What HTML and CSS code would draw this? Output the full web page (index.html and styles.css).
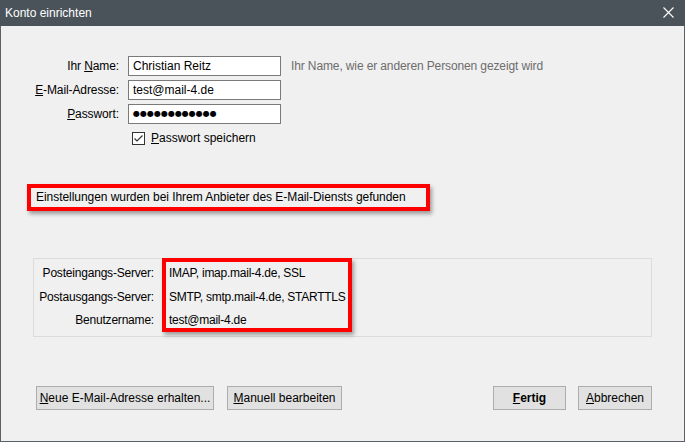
FILE: index.html
```html
<!DOCTYPE html>
<html lang="de">
<head>
    <meta charset="UTF-8">
    <meta name="viewport" content="width=device-width, initial-scale=1.0">
    <title>Konto einrichten</title>
    <link rel="stylesheet" href="styles.css">
</head>
<body>
    <div class="window">
        <div class="titlebar">
            <span class="title">Konto einrichten</span>
            <svg class="close" width="11" height="11" viewBox="0 0 11 11">
                <path d="M0.5 0.5 L10.5 10.5 M10.5 0.5 L0.5 10.5" stroke="#fff" stroke-width="1.1" fill="none"/>
            </svg>
        </div>

        <div class="content">
            <div class="form-grid">
                <label class="label" for="name">Ihr <u>N</u>ame:</label>
                <input class="field" type="text" id="name" value="Christian Reitz">
                <span class="hint">Ihr Name, wie er anderen Personen gezeigt wird</span>

                <label class="label" for="email"><u>E</u>-Mail-Adresse:</label>
                <input class="field" type="text" id="email" value="test@mail-4.de">
                <span></span>

                <label class="label" for="pass"><u>P</u>asswort:</label>
                <div class="field dots" id="pass">●●●●●●●●●●●●</div>
                <span></span>

                <span></span>
                <label class="check-row">
                    <svg class="checkbox" width="13" height="13" viewBox="0 0 13 13">
                        <rect x="0.5" y="0.5" width="12" height="12" fill="#fff" stroke="#333" stroke-width="1"/>
                        <path d="M2.5 6.5 L5 9 L10.5 3.5" stroke="#333" stroke-width="1.2" fill="none"/>
                    </svg>
                    <span><u>P</u>asswort speichern</span>
                </label>
                <span></span>
            </div>

            <div class="notice">Einstellungen wurden bei Ihrem Anbieter des E-Mail-Diensts gefunden</div>

            <div class="server-group">
                <div class="server-labels">
                    <div>Posteingangs-Server:</div>
                    <div>Postausgangs-Server:</div>
                    <div>Benutzername:</div>
                </div>
                <div class="server-values">
                    <div>IMAP, imap.mail-4.de, SSL</div>
                    <div>SMTP, smtp.mail-4.de, STARTTLS</div>
                    <div>test@mail-4.de</div>
                </div>
            </div>

            <div class="button-row">
                <button class="btn btn-new"><u>N</u>eue E-Mail-Adresse erhalten...</button>
                <button class="btn btn-manual"><u>M</u>anuell bearbeiten</button>
                <span class="spacer"></span>
                <button class="btn btn-done"><u>F</u>ertig</button>
                <button class="btn btn-cancel"><u>A</u>bbrechen</button>
            </div>
        </div>
    </div>
</body>
</html>
```

FILE: styles.css
```css
body {
    margin: 0;
    padding: 0;
    background-color: #f0f0f0;
    font-family: "Liberation Sans", Arial, sans-serif;
    font-size: 12px;
    color: #000;
}
.window {
    width: 685px;
    height: 442px;
    box-sizing: border-box;
    border: 1px solid #5b6166;
    border-top: none;
    background-color: #f0f0f0;
}
.titlebar {
    height: 26px;
    margin: 0 -1px;
    background-color: #4b535a;
    display: flex;
    align-items: center;
    justify-content: space-between;
    padding: 0 11px 0 5px;
}
.title {
    color: #fff;
    font-size: 12px;
}
.close {
    display: block;
    margin-top: -1px;
}
.content {
    padding-top: 30px;
}
.form-grid {
    display: grid;
    grid-template-columns: 118px 153px auto;
    column-gap: 9px;
    row-gap: 4px;
    align-items: center;
}
.label {
    text-align: right;
    letter-spacing: -0.1px;
}
.field {
    box-sizing: border-box;
    height: 20px;
    width: 153px;
    margin: 0;
    padding: 0 4px;
    border: 1px solid #7a7a7a;
    background-color: #fff;
    font-family: inherit;
    font-size: 12px;
    color: #000;
    outline: none;
}
.dots {
    font-family: "DejaVu Sans", sans-serif;
    font-size: 8px;
    line-height: 18px;
    letter-spacing: 0;
}
.hint {
    color: #6d6d6d;
    padding-left: 1px;
    letter-spacing: -0.12px;
}
.check-row {
    display: flex;
    align-items: center;
    gap: 6px;
    margin-left: 4px;
    margin-top: 3px;
    height: 14px;
}
.checkbox {
    display: block;
}
.notice {
    margin: 39px 0 0 26px;
    width: 403px;
    height: 27px;
    box-sizing: border-box;
    border: 4px solid #ff0000;
    box-shadow: 2px 3px 4px rgba(0, 0, 0, 0.35);
    padding-left: 5px;
    line-height: 19px;
    letter-spacing: -0.05px;
    white-space: nowrap;
}
.server-group {
    margin: 47px 0 0 32px;
    width: 619px;
    height: 79px;
    box-sizing: border-box;
    border: 1px solid #dcdcdc;
    display: flex;
    gap: 8px;
}
.server-labels {
    width: 120px;
    text-align: right;
    padding-top: 3px;
    line-height: 23.5px;
    white-space: nowrap;
    letter-spacing: -0.2px;
}
.server-values {
    margin-top: -1px;
    width: 190px;
    height: 74px;
    box-sizing: border-box;
    border: 4px solid #ff0000;
    box-shadow: 2px 3px 4px rgba(0, 0, 0, 0.35);
    padding-left: 3px;
    line-height: 23.5px;
    white-space: nowrap;
    letter-spacing: -0.25px;
}
.button-row {
    display: flex;
    margin: 49px 32px 0 35px;
    gap: 13px;
}
.spacer {
    flex: 1;
}
.btn {
    height: 24px;
    box-sizing: border-box;
    border: 1px solid #adadad;
    background-color: #e1e1e1;
    font-family: inherit;
    font-size: 12px;
    color: #000;
    padding: 0;
    margin: 0;
    white-space: nowrap;
}
.btn-new {
    width: 178px;
}
.btn-manual {
    width: 115px;
}
.btn-done {
    width: 73px;
    font-weight: bold;
    margin-right: -1px;
}
.btn-cancel {
    width: 74px;
}
```
